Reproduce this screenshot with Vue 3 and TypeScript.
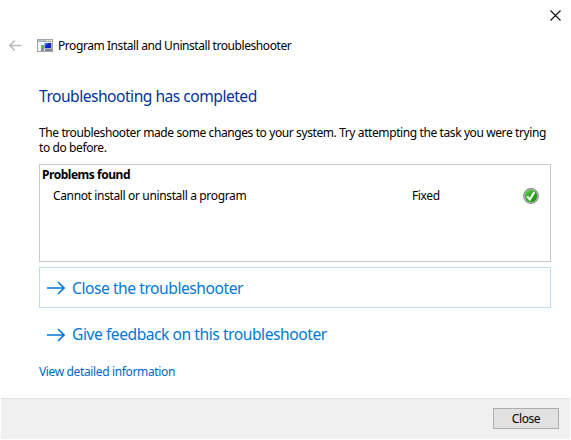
<script setup lang="ts">
interface Problem {
  name: string
  status: string
}

const problems: Problem[] = [{ name: 'Cannot install or uninstall a program', status: 'Fixed' }]
</script>

<template>
  <main class="dialog">
    <header class="caption">
      <svg class="dismiss" viewBox="0 0 11 11" role="img" aria-label="Close window">
        <path d="M.5.5l10 10M10.5.5l-10 10" fill="none" stroke="#111" stroke-width="1.15" />
      </svg>
    </header>

    <div class="titlebar">
      <svg class="back" viewBox="0 0 13 11" aria-hidden="true">
        <path d="M1 5.5h11.5M5.7.5L.9 5.5l4.8 5" fill="none" stroke="#b9b9b9" stroke-width="1.5" />
      </svg>
      <svg class="app" viewBox="0 0 16 13" aria-hidden="true">
        <path d="M0 0h16v13H0z" fill="#9da5ad" />
        <path d="M1 3h14v9H1z" fill="#f3f5f7" />
        <path d="M1 1h14v1.4H1z" fill="#b5bcc3" />
        <path d="M10 1h1v1h-1zM12 1h1v1h-1zM14 1h1v1h-1z" fill="#fff" />
        <path d="M7 4h8v6H7z" fill="#a9b5c9" />
        <path d="M8 4h6v5H8z" fill="#1424c4" />
        <path d="M8 4h3.5L8 7.5z" fill="#3d70e6" />
        <path d="M8 10h7v2H8z" fill="#808890" />
        <path d="M4 6h3v6H4z" fill="#858d95" />
        <path d="M4 7h2v2.5H4z" fill="#50cf3d" />
      </svg>
      <span class="title">Program Install and Uninstall troubleshooter</span>
    </div>

    <section class="content">
      <h1>Troubleshooting has completed</h1>
      <p class="summary">
        The troubleshooter made some changes to your system. Try attempting the task you were trying<br />
        to do before.
      </p>

      <div class="results">
        <h2>Problems found</h2>
        <div v-for="problem in problems" :key="problem.name" class="problem">
          <span class="name">{{ problem.name }}</span>
          <span class="status">{{ problem.status }}</span>
          <svg class="check" viewBox="0 0 16 16" aria-hidden="true">
            <defs>
              <linearGradient id="green" x1="0" y1="0" x2="1" y2="1">
                <stop offset="0" stop-color="#75ce65" />
                <stop offset=".5" stop-color="#2ca51f" />
                <stop offset="1" stop-color="#159607" />
              </linearGradient>
            </defs>
            <circle cx="8" cy="8" r="7.9" fill="#858585" />
            <circle cx="8" cy="8" r="7.1" fill="#b9b9be" />
            <circle cx="8" cy="8" r="6.2" fill="url(#green)" />
            <path d="M4.1 8.5l2.8 3L11.3 4" fill="none" stroke="#fff" stroke-width="2.1" />
          </svg>
        </div>
      </div>

      <button class="command selected">
        <svg viewBox="0 0 18 14" aria-hidden="true"><path d="M0 7h17M11 1l6 6-6 6" /></svg>
        <span>Close the troubleshooter</span>
      </button>
      <button class="command">
        <svg viewBox="0 0 18 14" aria-hidden="true"><path d="M0 7h17M11 1l6 6-6 6" /></svg>
        <span>Give feedback on this troubleshooter</span>
      </button>
      <a class="details">View detailed information</a>
    </section>

    <footer>
      <button class="close">Close</button>
    </footer>
  </main>
</template>

<style>
body {
  margin: 0;
  background: #fff;
}
</style>

<style scoped>
* {
  box-sizing: border-box;
}

.dialog {
  display: flex;
  flex-direction: column;
  width: 571px;
  height: 440px;
  padding: 0 1px 1px;
  overflow: hidden;
  background: #fff;
  color: #000;
  font: 12px/15px "Noto Sans", "Open Sans", sans-serif;
  letter-spacing: -0.4px;
  white-space: nowrap;
}

button {
  padding: 0;
  border: 0;
  background: none;
  font: inherit;
  letter-spacing: inherit;
}

svg {
  display: block;
  flex: none;
}

.caption {
  display: flex;
  justify-content: flex-end;
  height: 34px;
  padding: 10px 9px 0 0;
}

.dismiss {
  width: 11px;
  height: 11px;
}

.titlebar {
  display: flex;
  align-items: center;
  height: 22px;
  padding-left: 8px;
}

.back {
  width: 13px;
  height: 11px;
}

.app {
  width: 16px;
  height: 13px;
  margin: 0 5px 0 15px;
}

.title {
  letter-spacing: -0.43px;
}

.content {
  display: flex;
  flex-direction: column;
  height: 342px;
  padding: 29px 19px 0 38px;
}

h1,
h2,
p {
  margin: 0;
}

h1 {
  height: 39px;
  color: #003399;
  font-size: 15.6px;
  font-weight: 400;
  line-height: 22px;
  letter-spacing: -0.5px;
}

.summary {
  height: 40px;
  padding-top: 1px;
}

.results {
  height: 98px;
  border: 1px solid #c8c8c8;
}

h2 {
  height: 22px;
  padding: 2px 0 0 2px;
  font-size: 12px;
  line-height: 15px;
  letter-spacing: -0.47px;
}

.problem {
  display: grid;
  grid-template-columns: 359px 111px 16px;
  padding: 1px 0 0 13px;
}

.name,
.status {
  letter-spacing: -0.36px;
}

.check {
  width: 16px;
  height: 16px;
}

.command {
  display: flex;
  align-items: center;
  gap: 7px;
  height: 41px;
  margin-top: 5px;
  padding-left: 7px;
  border: 1px solid transparent;
  color: #0078d7;
  font-size: 15.6px;
  line-height: 22px;
  letter-spacing: -0.45px;
}

.command:not(.selected) {
  padding-top: 1px;
}

.selected {
  border-color: #bcdcf4;
}

.command svg {
  width: 18px;
  height: 14px;
  margin-top: 1px;
  fill: none;
  stroke: #0078d7;
  stroke-width: 1.6;
}

.details {
  width: max-content;
  margin-top: 10px;
  color: #0066cc;
  letter-spacing: -0.36px;
}

footer {
  display: flex;
  align-items: flex-start;
  justify-content: flex-end;
  height: 41px;
  padding: 9px 11px 0 0;
  border-top: 1px solid #dfdfdf;
  background: #f0f0f0;
}

.close {
  width: 66px;
  height: 21px;
  border: 1px solid #adadad;
  background: #e1e1e1;
  color: #000;
}
</style>
